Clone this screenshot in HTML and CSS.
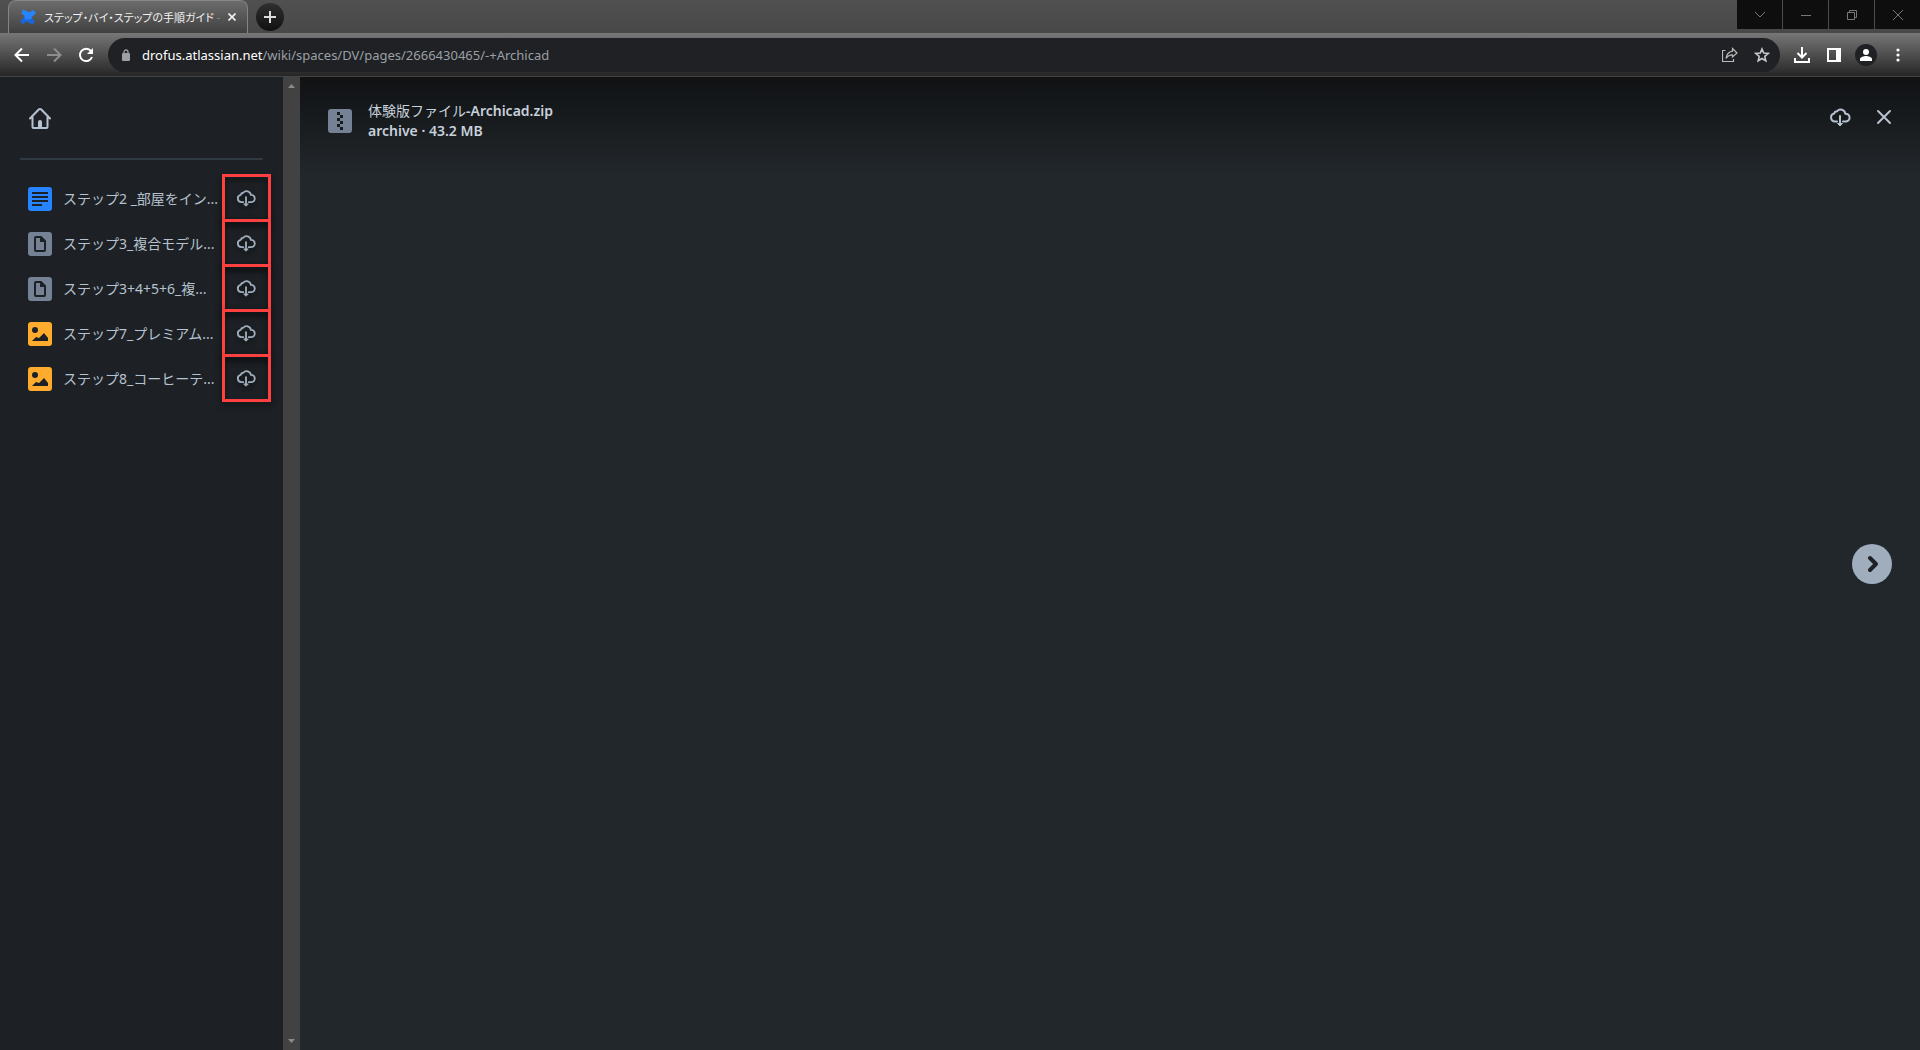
FILE: index.html
```html
<!DOCTYPE html>
<html lang="ja">
<head>
    <meta charset="UTF-8">
    <meta name="viewport" content="width=device-width, initial-scale=1.0">
    <title>ステップ・バイ・ステップの手順ガイド</title>
    <link rel="stylesheet" href="styles.css">
</head>
<body>
    <!-- Shared icons -->
    <svg class="sprite" aria-hidden="true">
        <symbol id="cloud" viewBox="0 0 24 24">
            <path d="M9 16.500H7a4 4 0 0 1-.8-7.900A3 3 0 0 1 9 6.300 4.700 4.700 0 0 1 17.300 8.700 3.900 3.900 0 0 1 18 16.500h-3" fill="none" stroke="currentColor" stroke-width="2" stroke-linecap="round" stroke-linejoin="round"/>
            <path d="M12 11v8" fill="none" stroke="currentColor" stroke-width="2" stroke-linecap="round"/>
            <path d="M9.500 18.500h5L12 21z" fill="currentColor" stroke="currentColor" stroke-linejoin="round"/>
        </symbol>
        <symbol id="doc" viewBox="0 0 24 24">
            <rect width="24" height="24" rx="3" fill="#2684ff"/>
            <path d="M4 6h16M4 10h16M4 14h16M4 18h10" stroke="#1d2125" stroke-width="2"/>
        </symbol>
        <symbol id="file" viewBox="0 0 24 24">
            <rect width="24" height="24" rx="3" fill="#758195"/>
            <path d="M8 5h5l4 4v9a1 1 0 0 1-1 1H8a1 1 0 0 1-1-1V6a1 1 0 0 1 1-1z" fill="none" stroke="#1d2125" stroke-width="2"/>
            <path d="M12 4v6h6z" fill="#1d2125"/>
            <path d="M14 4h4v4z" fill="#758195"/>
        </symbol>
        <symbol id="image" viewBox="0 0 24 24">
            <rect width="24" height="24" rx="3" fill="#ffab2e"/>
            <circle cx="7" cy="8" r="3" fill="#1d2125"/>
            <path d="M4 19l4-4 3 1 5-5 4 5v3z" fill="#1d2125"/>
        </symbol>
    </svg>

    <div class="tab-strip">
        <div class="tab">
            <svg class="favicon" viewBox="0 0 16 16">
                <path d="M0 13c2.500-4.500 4.500-6 8-4.500l4.500 1.800 2.300 1-1.800 4.200-5-2.200C5.500 12.200 5 13 3.800 15z" fill="#1868db"/>
                <path d="M16 3c-2.500 4.500-4.500 6-8 4.500L3.500 5.700 1.200 4.700 3 .5l5 2.200c2.500 1.100 3 .3 4.200-1.700z" fill="#2684ff"/>
                <path d="M4 5.800l7-.2 1 4.500-7 .3z" fill="#2684ff"/>
            </svg>
            <span class="tab-title">ステップ・バイ・ステップの手順ガイド <span>-</span></span>
            <button class="tab-close" aria-label="タブを閉じる">
                <svg width="8" height="8" viewBox="0 0 8 8"><path d="M.5.5l7 7M7.500.5l-7 7" stroke="#eee" stroke-width="1.700"/></svg>
            </button>
        </div>
        <button class="new-tab" aria-label="新しいタブ">
            <svg width="12" height="12" viewBox="0 0 12 12"><path d="M6 0v12M0 6h12" stroke="#ddd" stroke-width="2"/></svg>
        </button>
        <div class="window-buttons">
            <button aria-label="タブを検索"><svg width="12" height="12" viewBox="0 0 12 12"><path d="M1 3l5 5 5-5"/></svg></button>
            <button aria-label="最小化"><svg width="12" height="12" viewBox="0 0 12 12"><path d="M1 6.500h10"/></svg></button>
            <button aria-label="元に戻す"><svg width="12" height="12" viewBox="0 0 12 12"><path d="M1.500 3.500h7v7h-7zM3.500 3.500v-2h7v7h-2"/></svg></button>
            <button aria-label="閉じる"><svg width="12" height="12" viewBox="0 0 12 12"><path d="M1 1l10 10M11 1L1 11"/></svg></button>
        </div>
    </div>

    <div class="toolbar">
        <button aria-label="戻る"><svg width="16" height="16" viewBox="0 0 16 16"><path d="M15 8H2M8 1.500L1.500 8 8 14.500" fill="none" stroke="#fff" stroke-width="2"/></svg></button>
        <button aria-label="進む"><svg width="16" height="16" viewBox="0 0 16 16"><path d="M1 8h13M8 1.500L14.500 8 8 14.500" fill="none" stroke="#8d8d8d" stroke-width="2"/></svg></button>
        <button aria-label="再読み込み"><svg width="16" height="16" viewBox="0 0 16 16"><path d="M13 4A6.200 6.200 0 1 0 14 10" fill="none" stroke="#fff" stroke-width="2"/><path d="M15 1v6H9z" fill="#fff"/></svg></button>
        <div class="address-bar">
            <svg class="lock" width="10" height="12" viewBox="0 0 10 12"><rect x="1" y="4" width="8" height="8" rx="1" fill="#9aa0a6"/><path d="M3 5V3a2 2 0 0 1 4 0v2" fill="none" stroke="#9aa0a6" stroke-width="1.300"/></svg>
            <p class="url"><span>drofus.atlassian.net</span>/wiki/spaces/DV/pages/2666430465/-+Archicad</p>
            <button aria-label="共有"><svg width="16" height="16" viewBox="0 0 16 16"><path d="M3.500 3.500h-3v11h11V12M10.500 1.500L15 6l-4.500 4V7.800C7.500 7.800 5.500 9 4 11.500 4.500 7.500 6.500 5 10.500 4.200z" fill="none" stroke="#b8b8b8" stroke-width="1.200"/></svg></button>
            <button aria-label="ブックマーク"><svg width="16" height="16" viewBox="0 0 16 16"><path d="M8 2l1.700 4.100 4.500.4-3.400 2.900 1 4.400L8 11.500l-3.800 2.300 1-4.400L1.800 6.500l4.500-.4z" fill="none" stroke="#c8c8c8" stroke-width="1.600"/></svg></button>
        </div>
        <button aria-label="ダウンロード"><svg width="16" height="16" viewBox="0 0 16 16"><path d="M8 0v10M3.500 6L8 10.500 12.500 6M1 11v4h14v-4" fill="none" stroke="#fff" stroke-width="2"/></svg></button>
        <button aria-label="サイドパネル"><svg width="14" height="14" viewBox="0 0 14 14"><path d="M0 0h14v14H0zM2 2v10h7V2z" fill="#fff" fill-rule="evenodd"/></svg></button>
        <button aria-label="プロフィール"><svg width="22" height="22" viewBox="0 0 22 22"><circle cx="11" cy="11" r="11" fill="#202124"/><circle cx="11" cy="8" r="3" fill="#fff"/><path d="M5 17v-2c0-2 4-3 6-3s6 1 6 3v2z" fill="#fff"/></svg></button>
        <button aria-label="メニュー"><svg width="4" height="14" viewBox="0 0 4 14"><circle cx="2" cy="2" r="1.600" fill="#fff"/><circle cx="2" cy="7" r="1.600" fill="#fff"/><circle cx="2" cy="12" r="1.600" fill="#fff"/></svg></button>
    </div>

    <div class="viewer">
        <aside class="sidebar">
            <a class="home" href="#" aria-label="ホーム">
                <svg width="24" height="24" viewBox="0 0 24 24">
                    <path d="M2 12.500L11 3.300a1.400 1.400 0 0 1 2 0l9 9.200M4.500 11v10a1 1 0 0 0 1 1h13a1 1 0 0 0 1-1V11" fill="none" stroke="#b6c2cf" stroke-width="2" stroke-linecap="round"/>
                    <path d="M10 22v-6a2 2 0 0 1 4 0v6z" fill="#b6c2cf"/>
                </svg>
            </a>
            <hr>
            <ul class="file-list">
                <li>
                    <svg class="type"><use href="#doc"/></svg>
                    <a href="#">ステップ2 _部屋をイン...</a>
                    <button class="download" aria-label="ダウンロード"><svg><use href="#cloud"/></svg></button>
                </li>
                <li>
                    <svg class="type"><use href="#file"/></svg>
                    <a href="#">ステップ3_複合モデル...</a>
                    <button class="download" aria-label="ダウンロード"><svg><use href="#cloud"/></svg></button>
                </li>
                <li>
                    <svg class="type"><use href="#file"/></svg>
                    <a href="#">ステップ3+4+5+6_複...</a>
                    <button class="download" aria-label="ダウンロード"><svg><use href="#cloud"/></svg></button>
                </li>
                <li>
                    <svg class="type"><use href="#image"/></svg>
                    <a href="#">ステップ7_プレミアム...</a>
                    <button class="download" aria-label="ダウンロード"><svg><use href="#cloud"/></svg></button>
                </li>
                <li>
                    <svg class="type"><use href="#image"/></svg>
                    <a href="#">ステップ8_コーヒーテ...</a>
                    <button class="download" aria-label="ダウンロード"><svg><use href="#cloud"/></svg></button>
                </li>
            </ul>
        </aside>

        <div class="scrollbar">
            <svg width="7" height="4" viewBox="0 0 7 4"><path d="M0 4L3.500 0 7 4z" fill="#8a8a8a"/></svg>
            <svg width="7" height="4" viewBox="0 0 7 4"><path d="M0 0l3.500 4L7 0z" fill="#8a8a8a"/></svg>
        </div>

        <main class="preview">
            <header>
                <svg class="type" viewBox="0 0 24 24">
                    <rect width="24" height="24" rx="3" fill="#758195"/>
                    <path d="M9 3h3v3H9zM12 6h3v3h-3zM9 9h3v3H9zM12 12h3v3h-3zM9 15h3v3H9zM12 18h3v3h-3z" fill="#161a1d"/>
                </svg>
                <div class="file-info">
                    <h1>体験版ファイル<b>-Archicad.zip</b></h1>
                    <p>archive · 43.2 MB</p>
                </div>
                <button aria-label="ダウンロード"><svg width="24" height="24"><use href="#cloud"/></svg></button>
                <button aria-label="閉じる"><svg width="24" height="24" viewBox="0 0 24 24"><path d="M6 6l12 12M18 6L6 18" stroke="currentColor" stroke-width="2" stroke-linecap="round"/></svg></button>
            </header>
            <div class="stage">
                <button class="next" aria-label="次へ">
                    <svg width="24" height="24" viewBox="0 0 24 24"><path d="M10 6l6 6-6 6" fill="none" stroke="#1d2125" stroke-width="4" stroke-linecap="round" stroke-linejoin="round"/></svg>
                </button>
            </div>
        </main>
    </div>
</body>
</html>
```

FILE: styles.css
```css
* {
    margin: 0;
    padding: 0;
    box-sizing: border-box;
}

body {
    min-height: 100vh;
    display: flex;
    flex-direction: column;
    background: #22272b;
    font-family: 'Noto Sans', 'Noto Sans CJK JP', sans-serif;
    font-size: 14px;
    color: #b6c2cf;
}

button {
    display: flex;
    align-items: center;
    justify-content: center;
    flex-shrink: 0;
    border: none;
    background: none;
    color: inherit;
    cursor: pointer;
}

a {
    color: inherit;
    text-decoration: none;
}

.sprite {
    position: absolute;
    width: 0;
    height: 0;
}

/* Browser tabs */
.tab-strip {
    display: flex;
    height: 33px;
    padding-left: 8px;
    background: linear-gradient(#505050, #484848);
}

.tab {
    display: flex;
    align-items: center;
    width: 240px;
    padding: 0 7px 0 11px;
    border: 1px solid #858585;
    border-bottom: none;
    border-radius: 8px 8px 0 0;
    background: linear-gradient(#6c6c6c, #404040);
}

.favicon {
    width: 16px;
    height: 16px;
    margin-right: 8px;
    flex-shrink: 0;
}

.tab-title {
    flex: 1;
    white-space: nowrap;
    font-family: 'Noto Sans CJK JP', sans-serif;
    font-size: 11px;
    font-feature-settings: "palt";
    color: #f1f1f1;
}

.tab-title span {
    color: #8a8a8a;
}

.tab-close {
    width: 16px;
    height: 16px;
}

.new-tab {
    width: 28px;
    height: 28px;
    margin: 3px 0 0 8px;
    border-radius: 50%;
    background: linear-gradient(#303030, #111);
}

.window-buttons {
    display: flex;
    gap: 1px;
    height: 29px;
    margin-left: auto;
}

.window-buttons button {
    width: 45px;
    background: #0e0e0e;
}

.window-buttons path {
    fill: none;
    stroke: #787878;
}

/* Browser toolbar */
.toolbar {
    display: flex;
    align-items: center;
    height: 44px;
    padding: 0 6px;
    border-bottom: 1px solid #444;
    background: linear-gradient(#777, #262626);
}

.toolbar button {
    width: 32px;
    height: 32px;
}

.address-bar {
    display: flex;
    align-items: center;
    flex: 1;
    height: 34px;
    margin: 0 6px;
    padding: 0 2px 0 13px;
    border-radius: 17px;
    background: #202124;
}

.url {
    flex: 1;
    margin-left: 11px;
    font-size: 13px;
    line-height: 20px;
    color: #9aa0a6;
}

.url span {
    color: #fff;
}

/* File viewer */
.viewer {
    display: flex;
    flex: 1;
}

.sidebar {
    width: 283px;
    padding: 29px 12px 0 20px;
    background: #1d2125;
}

.home {
    display: block;
    width: 24px;
    height: 24px;
    margin-left: 8px;
}

.sidebar hr {
    height: 2px;
    margin: 28px 8px 16px 0;
    border: none;
    border-radius: 1px;
    background: #303a42;
}

.file-list {
    list-style: none;
}

.file-list li {
    display: flex;
    align-items: center;
    height: 45px;
    padding-left: 8px;
}

.type {
    width: 24px;
    height: 24px;
    flex-shrink: 0;
}

.file-list a {
    flex: 1;
    margin-left: 11px;
    line-height: 20px;
    white-space: nowrap;
}

.download {
    width: 49px;
    height: 48px;
    margin-top: -1px;
    padding-right: 2px;
    border: 3px solid #ff4040;
    filter: drop-shadow(0 3px 3px rgba(0, 0, 0, 0.6));
    color: #9fadbc;
}

.download svg {
    width: 22px;
    height: 22px;
}

.scrollbar {
    display: flex;
    flex-direction: column;
    align-items: center;
    justify-content: space-between;
    width: 17px;
    padding: 7px 0;
    background: #424242;
}

.preview {
    display: flex;
    flex-direction: column;
    flex: 1;
    background: #22272b;
}

.preview header {
    display: flex;
    align-items: center;
    height: 98px;
    padding: 0 16px 18px 28px;
    background: linear-gradient(#101214, #22272b);
}

.preview header .type {
    margin-top: 8px;
}

.preview header button {
    width: 40px;
    height: 40px;
    margin-left: 4px;
}

.file-info {
    flex: 1;
    margin: 8px 0 0 16px;
    font-size: 14px;
    line-height: 20px;
    font-weight: 600;
    color: #c7d1db;
}

.file-info h1 {
    font-size: 14px;
    font-weight: 400;
}

.file-info b {
    font-weight: 600;
}

.stage {
    display: flex;
    flex: 1;
    align-items: center;
    justify-content: flex-end;
    padding: 0 28px 98px 0;
}

.next {
    width: 40px;
    height: 40px;
    border-radius: 50%;
    background: #9fadbc;
}
```
